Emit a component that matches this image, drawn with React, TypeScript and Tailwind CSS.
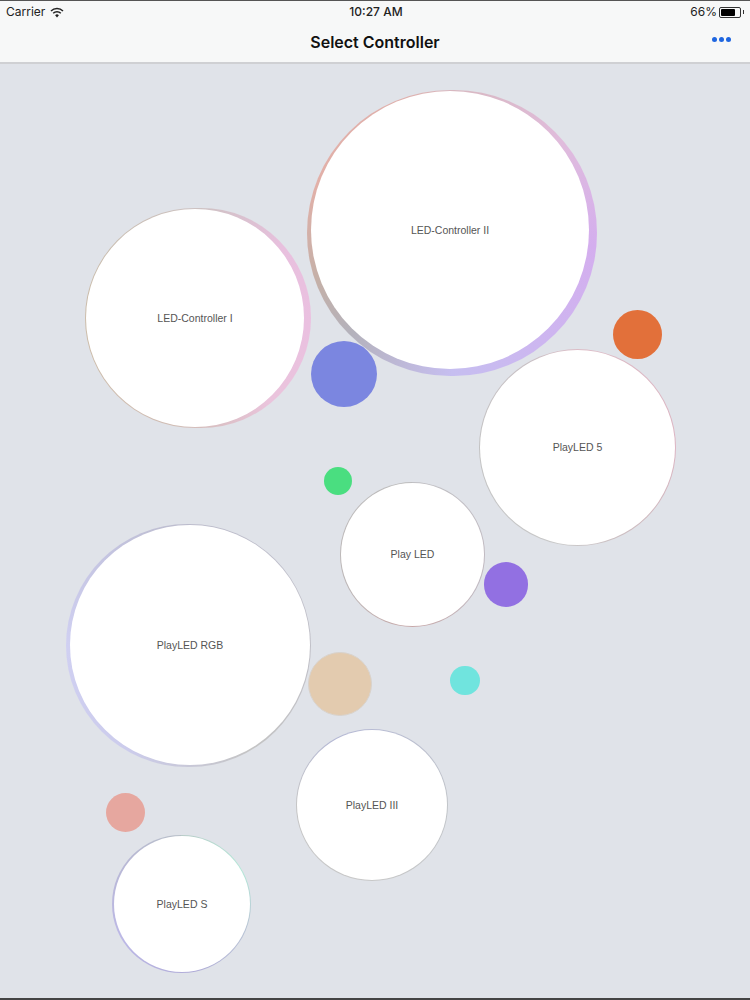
const SANS = 'font-["Inter","Liberation_Sans",sans-serif]';

// left/top are relative to the canvas, which starts 64px down the page
const CONTROLLERS = [
  {
    name: 'LED-Controller II',
    halo: 'left-[307px] top-[26px] w-[290px] h-[286px] bg-[conic-gradient(#d8b8c0_0deg,#e0bcdc_50deg,#d4aeee_95deg,#cdb6f0_140deg,#c6bef0_180deg,#b4b2bc_225deg,#c4b0a8_250deg,#e2b0a8_290deg,#dfb0ac_340deg,#d8b8c0_360deg)]',
    face: 'left-[311px] top-[27px] w-[278px] h-[278px]',
  },
  {
    name: 'LED-Controller I',
    halo: 'left-[85px] top-[144px] w-[226px] h-[220px] bg-[conic-gradient(#cdc2c2_0deg,#e8c0de_50deg,#eac0e0_95deg,#eac4dc_140deg,#d0bcb4_190deg,#ccbca8_260deg,#c8bcae_310deg,#cdc2c2_360deg)]',
    face: 'left-[86px] top-[145px] w-[218px] h-[218px]',
  },
  {
    name: 'PlayLED 5',
    halo: 'left-[479px] top-[285px] w-[197px] h-[197px] bg-[conic-gradient(#dcbcc6_0deg,#dcb4c2_90deg,#d0b8be_130deg,#c8c8c8_190deg,#c2c2c2_270deg,#c8c0c4_330deg,#dcbcc6_360deg)]',
    face: 'left-[480px] top-[286px] w-[195px] h-[195px]',
  },
  {
    name: 'Play LED',
    halo: 'left-[340px] top-[418px] w-[145px] h-[145px] bg-[conic-gradient(#c0c0c4_0deg,#c0b8c0_120deg,#c8a8a8_180deg,#bcb6b6_240deg,#bcbcbc_360deg)]',
    face: 'left-[341px] top-[419px] w-[143px] h-[143px]',
  },
  {
    name: 'PlayLED RGB',
    halo: 'left-[66px] top-[460px] w-[245px] h-[243px] bg-[conic-gradient(#bcbccc_0deg,#c0c0c8_90deg,#c4c4c4_150deg,#ccccec_210deg,#d0d0f2_270deg,#c4c4e0_320deg,#bcbccc_360deg)]',
    face: 'left-[70px] top-[461px] w-[240px] h-[240px]',
  },
  {
    name: 'PlayLED III',
    halo: 'left-[296px] top-[665px] w-[152px] h-[152px] bg-[conic-gradient(#b8bcd4_0deg,#c0c4c8_90deg,#c8c8c8_180deg,#c4c4c4_270deg,#b4b8d4_330deg,#b8bcd4_360deg)]',
    face: 'left-[297px] top-[666px] w-[150px] h-[150px]',
  },
  {
    name: 'PlayLED S',
    halo: 'left-[112px] top-[771px] w-[139px] h-[138px] bg-[conic-gradient(#b8ccc8_0deg,#b4e8d8_60deg,#b8c4d4_110deg,#b0acd8_170deg,#bcb8e6_240deg,#b8b8d4_310deg,#b8c0c8_360deg)]',
    face: 'left-[114px] top-[772px] w-[136px] h-[136px]',
  },
];

const DOTS = [
  'left-[613px] top-[246px] w-[49px] h-[49px] bg-[#e2703a]',
  'left-[311px] top-[277px] w-[66px] h-[66px] bg-[#7b86e0]',
  'left-[324px] top-[403px] w-[28px] h-[28px] bg-[#4ade80]',
  'left-[484px] top-[498px] w-[44px] h-[45px] bg-[#9270e2]',
  'left-[308px] top-[588px] w-[64px] h-[64px] bg-[#e3cbaf] border border-[#d8d2cc]',
  'left-[450px] top-[602px] w-[30px] h-[29px] bg-[#70e4de]',
  'left-[106px] top-[729px] w-[39px] h-[39px] bg-[#e6a79f]',
];

function WifiIcon() {
  return (
    <svg width="14" height="11" viewBox="0 0 14 11" className="text-[#222]">
      <path d="M1 4a8.6 8.6 0 0 1 12 0" fill="none" stroke="currentColor" strokeWidth="1.5" />
      <path d="M3.2 6.2a5.4 5.4 0 0 1 7.6 0" fill="none" stroke="currentColor" strokeWidth="1.5" />
      <path d="M5.1 8.2a2.7 2.7 0 0 1 3.8 0L7 10.4z" fill="currentColor" />
    </svg>
  );
}

function StatusBar() {
  return (
    <div className="h-[21px] pt-[1px] px-[6px] flex items-center justify-between text-[12px] text-[#222]">
      <div className="w-[200px] flex items-center gap-[5px]">
        <span>Carrier</span>
        <WifiIcon />
      </div>
      <span className="font-medium pl-[2px]">10:27 AM</span>
      <div className="w-[200px] flex items-center justify-end gap-[2px]">
        <span>66%</span>
        <div className="w-[22px] h-[11px] border border-[#333] rounded-[2px] p-[1px]">
          <div className="w-[14px] h-full bg-black rounded-[1px]" />
        </div>
        <div className="w-[1px] h-[4px] bg-[#333]" />
      </div>
    </div>
  );
}

function NavBar() {
  return (
    <div className="relative h-[41px] flex items-center justify-center">
      <h1 className="text-[16px] font-semibold text-[#111] -translate-y-[1px]">Select Controller</h1>
      <div className="absolute right-[19px] top-[15px] flex gap-[2px]">
        <div className="w-[5px] h-[5px] rounded-full bg-[#1f66e0]" />
        <div className="w-[5px] h-[5px] rounded-full bg-[#1f66e0]" />
        <div className="w-[5px] h-[5px] rounded-full bg-[#1f66e0]" />
      </div>
    </div>
  );
}

export default function App() {
  return (
    <div className={`w-[750px] h-[1000px] flex flex-col overflow-hidden bg-[#e0e3e9] ${SANS}`}>
      <header className="shrink-0 h-[64px] bg-[#f7f8f8] border-t border-t-[#555] border-b-2 border-b-[#cfd0d3]">
        <StatusBar />
        <NavBar />
      </header>
      <main className="relative flex-1 border-b-2 border-b-[#444]">
        {CONTROLLERS.map(c => (
          <div key={c.name}>
            <div className={`absolute rounded-full blur-[0.4px] ${c.halo}`} />
            <div className={`absolute rounded-full bg-white flex items-center justify-center pt-[1px] ${c.face}`}>
              <span className='font-["Liberation_Sans",sans-serif] text-[10.5px] text-[#555]'>{c.name}</span>
            </div>
          </div>
        ))}
        {DOTS.map(d => (
          <div key={d} className={`absolute rounded-full blur-[0.4px] ${d}`} />
        ))}
      </main>
    </div>
  );
}
